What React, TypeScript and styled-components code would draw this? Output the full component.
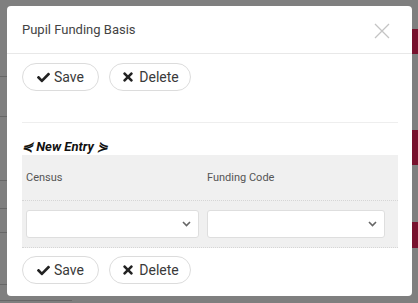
import React from "react";
import styled, { createGlobalStyle } from "styled-components";
import { FaCheck, FaTimes } from "react-icons/fa";

const Global = createGlobalStyle`
  html, body { margin: 0; padding: 0; }
  body {
    width: 418px; height: 303px; overflow: hidden;
    font-family: Roboto, "Liberation Sans", Arial, sans-serif;
    background: #ffffff;
  }
  * { box-sizing: border-box; }
`;

const Screen = styled.div`
  position: relative;
  width: 418px;
  height: 303px;
  overflow: hidden;
`;

const BackPage = styled.div`
  position: absolute;
  inset: 0;
  background: #ffffff;
`;

const BackLine = styled.div<{ $top: number; $left: number; $w: number }>`
  position: absolute;
  top: ${(p) => p.$top}px;
  left: ${(p) => p.$left}px;
  width: ${(p) => p.$w}px;
  height: 1px;
  background: #cfcfcf;
`;

const BackRed = styled.div<{ $top: number; $h: number }>`
  position: absolute;
  top: ${(p) => p.$top}px;
  right: 0;
  width: 20px;
  height: ${(p) => p.$h}px;
  background: #f0235a;
`;

const Overlay = styled.div`
  position: absolute;
  inset: 0;
  background: rgba(0, 0, 0, 0.5);
  padding: 6px 6px 0 7px;
`;

const Modal = styled.div`
  width: 405px;
  height: 290px;
  background: #fff;
  border-radius: 4px;
  display: flex;
  flex-direction: column;
`;

const Header = styled.div`
  height: 48px;
  border-bottom: 1px solid #e8e8e8;
  display: flex;
  align-items: center;
  justify-content: space-between;
  padding: 0 22px 0 15px;
`;

const Title = styled.div`
  font-size: 13px;
  color: #444;
  padding-bottom: 1px;
`;

const CloseBtn = styled.div`
  width: 16px;
  height: 16px;
  display: flex;
  margin-top: 2px;
`;

const Body = styled.div`
  padding: 9px 14px 0 15px;
  display: flex;
  flex-direction: column;
`;

const Toolbar = styled.div`
  display: flex;
  gap: 10px;
`;

const Button = styled.button<{ $w: number }>`
  width: ${(p) => p.$w}px;
  height: 28px;
  border: 1px solid #dcdcdc;
  border-radius: 14px;
  background: #fff;
  color: #3a3a3a;
  font-family: Roboto, "Liberation Sans", Arial, sans-serif;
  font-size: 14px;
  display: flex;
  align-items: center;
  justify-content: center;
  gap: 4px;
  padding: 0;
  cursor: pointer;
  svg { color: #222; }
`;

const Divider = styled.div`
  height: 1px;
  background: #eeeeee;
  margin-top: 31px;
`;

const Legend = styled.div`
  margin-top: 16px;
  font-size: 13px;
  font-weight: bold;
  font-style: italic;
  color: #111;
  line-height: 16px;
  height: 16px;
`;

const Panel = styled.div`
  background: #f0f0f0;
`;

const Row = styled.div<{ $h: number }>`
  display: grid;
  grid-template-columns: 181px 186px 1fr;
  height: ${(p) => p.$h}px;
  border-bottom: 1px dotted #d6d6d6;
  align-items: center;
`;

const HeadCell = styled.div`
  font-size: 11px;
  color: #555;
  padding: 0 4px;
  padding-bottom: 1px;
`;

const Cell = styled.div`
  padding: 0 4px;
`;

const Select = styled.div`
  height: 28px;
  background: #fff;
  border: 1px solid #dedede;
  border-radius: 3px;
  display: flex;
  align-items: center;
  justify-content: flex-end;
  padding-right: 7px;
`;

const BottomBar = styled(Toolbar)`
  margin-top: 8px;
`;

const Chevron = () => (
  <svg width="9" height="6" viewBox="0 0 9 6">
    <path d="M1 1 L4.5 4.5 L8 1" stroke="#666" strokeWidth="1.6" fill="none" />
  </svg>
);

const Buttons = ({ Bar }: { Bar: typeof Toolbar }) => (
  <Bar>
    <Button $w={77}>
      <FaCheck size={13} />
      Save
    </Button>
    <Button $w={82}>
      <FaTimes size={14} />
      Delete
    </Button>
  </Bar>
);

export default function App() {
  return (
    <>
      <Global />
      <Screen>
        <BackPage>
          <BackLine $top={76} $left={0} $w={7} />
          <BackLine $top={116} $left={0} $w={7} />
          <BackLine $top={180} $left={0} $w={7} />
          <BackLine $top={208} $left={0} $w={7} />
          <BackLine $top={232} $left={0} $w={7} />
          <BackLine $top={284} $left={0} $w={7} />
          <BackLine $top={300} $left={0} $w={72} />
          <BackRed $top={29} $h={25} />
          <BackRed $top={130} $h={35} />
          <BackRed $top={222} $h={26} />
        </BackPage>
        <Overlay>
          <Modal>
            <Header>
              <Title>Pupil Funding Basis</Title>
              <CloseBtn>
                <svg width="16" height="16" viewBox="0 0 16 16">
                  <path d="M1 1 L15 15 M15 1 L1 15" stroke="#c4c4c4" strokeWidth="1.3" />
                </svg>
              </CloseBtn>
            </Header>
            <Body>
              <Buttons Bar={Toolbar} />
              <Divider />
              <Legend>⋞ New Entry ⋟</Legend>
              <Panel>
                <Row $h={46}>
                  <HeadCell>Census</HeadCell>
                  <HeadCell>Funding Code</HeadCell>
                  <span />
                </Row>
                <Row $h={47}>
                  <Cell>
                    <Select>
                      <Chevron />
                    </Select>
                  </Cell>
                  <Cell>
                    <Select>
                      <Chevron />
                    </Select>
                  </Cell>
                  <span />
                </Row>
              </Panel>
              <Buttons Bar={BottomBar} />
            </Body>
          </Modal>
        </Overlay>
      </Screen>
    </>
  );
}
